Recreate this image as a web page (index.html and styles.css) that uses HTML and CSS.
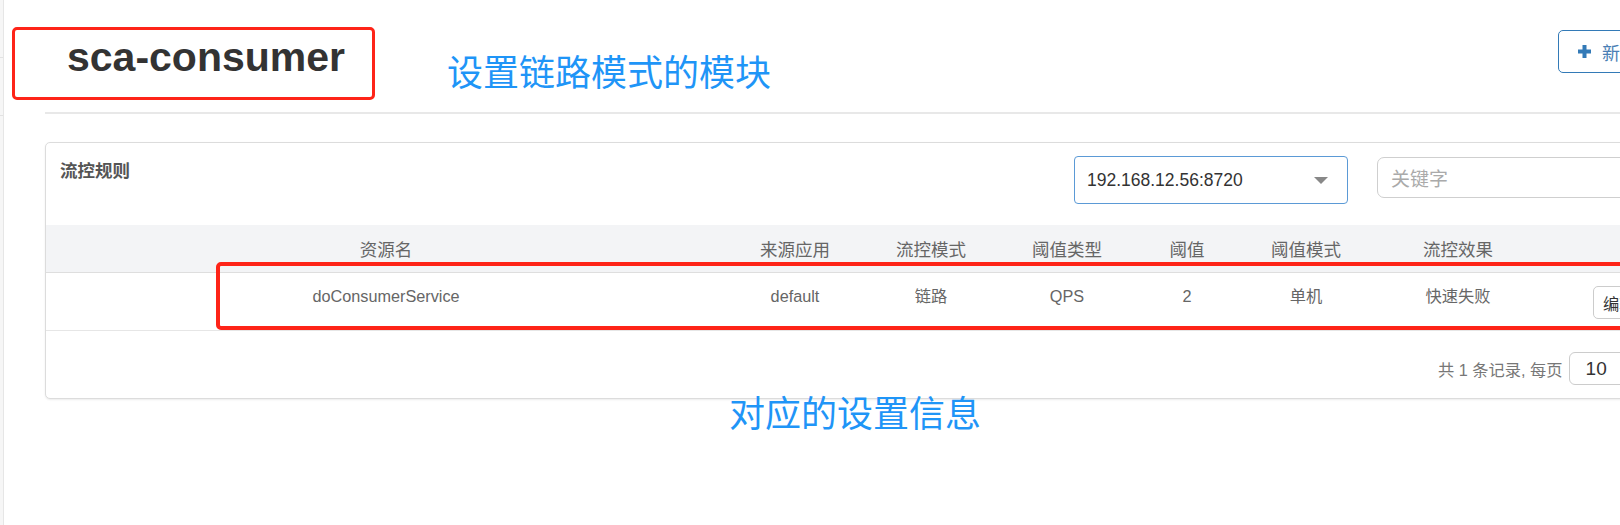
FILE: index.html
```html
<!DOCTYPE html>
<html lang="zh-CN">
<head>
<meta charset="utf-8">
<title>sca-consumer 流控规则</title>
<link rel="stylesheet" href="styles.css">
</head>
<body>
<div class="layout">
  <aside class="sidebar">
    <div class="sidebar-item"></div>
    <div class="sidebar-item"></div>
  </aside>
  <main class="main">
    <header class="page-header">
      <h1 class="page-title">sca-consumer</h1>
      <div class="header-actions">
        <button class="btn-add" type="button">
          <svg class="plus" width="15" height="15" viewBox="0 0 15 15" aria-hidden="true"><path d="M7.5 1v13M1 7.5h13" stroke="#337ab7" stroke-width="4" fill="none"/></svg>
          <span>新增流控规则</span>
        </button>
      </div>
    </header>

    <section class="card">
      <div class="card-head">
        <div class="card-title">流控规则</div>
        <div class="select">
          <span>192.168.12.56:8720</span>
          <span class="caret"></span>
        </div>
        <div class="search">关键字</div>
      </div>
      <table class="rules">
        <colgroup>
          <col class="c-res"><col class="c-app"><col class="c-mode"><col class="c-type">
          <col class="c-val"><col class="c-cluster"><col class="c-effect"><col class="c-op">
        </colgroup>
        <thead>
          <tr>
            <th>资源名</th><th>来源应用</th><th>流控模式</th><th>阈值类型</th>
            <th>阈值</th><th>阈值模式</th><th>流控效果</th><th>操作</th>
          </tr>
        </thead>
        <tbody>
          <tr>
            <td>doConsumerService</td><td>default</td><td>链路</td><td>QPS</td>
            <td>2</td><td>单机</td><td>快速失败</td>
            <td class="ops"><button class="btn-op" type="button">编辑</button><button class="btn-op" type="button">删除</button></td>
          </tr>
        </tbody>
      </table>
      <div class="pager">
        <span class="pager-text">共 1 条记录, 每页</span>
        <span class="page-size">10</span>
      </div>
    </section>
  </main>
</div>

<div class="mark mark-title"></div>
<div class="mark mark-row"></div>
<div class="note note-top">设置链路模式的模块</div>
<div class="note note-bottom">对应的设置信息</div>
</body>
</html>
```

FILE: styles.css
```css
html, body {
  margin: 0;
  padding: 0;
}
body {
  width: 1620px;
  height: 525px;
  overflow: hidden;
  position: relative;
  background: #fff;
  font-family: "Liberation Sans", "Noto Sans CJK SC", sans-serif;
  color: #333;
}
.layout {
  display: flex;
}
.sidebar {
  flex: 0 0 3px;
  height: 525px;
  background: #f6f6f6;
  border-right: 1px solid #e6e6e6;
}
.sidebar-item {
  height: 57px;
  border-bottom: 1px solid #e2e2e2;
}
.main {
  flex: 0 0 1700px;
  padding-left: 41px;
}
.page-header {
  display: grid;
  grid-template-columns: 1513px auto;
  height: 112px;
  border-bottom: 2px solid #e8e8e8;
}
.page-title {
  margin: 0;
  padding: 37px 0 0 22px;
  font-size: 41px;
  line-height: 41px;
  font-weight: bold;
  color: #333;
  white-space: nowrap;
}
.btn-add {
  margin-top: 30px;
  height: 43px;
  box-sizing: border-box;
  display: flex;
  align-items: center;
  gap: 10px;
  padding: 0 14px 0 18px;
  border: 1px solid #337ab7;
  border-radius: 5px;
  background: #fff;
  color: #4a7fb5;
  font-family: inherit;
  font-size: 18px;
  white-space: nowrap;
}
.plus {
  display: block;
}
.card {
  margin-top: 28px;
  width: 1660px;
  border: 1px solid #dcdcdc;
  border-radius: 5px;
  box-shadow: 0 1px 2px rgba(0, 0, 0, 0.08);
  background: #fff;
}
.card-head {
  display: grid;
  grid-template-columns: 985px 274px 400px;
  column-gap: 29px;
  height: 82px;
  padding-left: 14px;
  align-items: start;
}
.card-title {
  padding-top: 16px;
  font-size: 17.5px;
  line-height: 24px;
  font-weight: bold;
  color: #555;
}
.select {
  margin-top: 13px;
  height: 48px;
  box-sizing: border-box;
  display: flex;
  align-items: center;
  justify-content: space-between;
  padding: 0 19px 0 12px;
  border: 1px solid #5b9ad6;
  border-radius: 4px;
  font-size: 17.5px;
  color: #333;
}
.caret {
  width: 0;
  height: 0;
  border-left: 7px solid transparent;
  border-right: 7px solid transparent;
  border-top: 7px solid #888;
}
.search {
  margin-top: 14px;
  height: 41px;
  box-sizing: border-box;
  display: flex;
  align-items: center;
  padding-left: 13px;
  border: 1px solid #cfcfcf;
  border-radius: 7px;
  font-size: 19px;
  color: #aaa;
}
.rules {
  width: 1658px;
  table-layout: fixed;
  border-collapse: collapse;
}
.c-res { width: 680px; }
.c-app { width: 138px; }
.c-mode { width: 134px; }
.c-type { width: 138px; }
.c-val { width: 102px; }
.c-cluster { width: 136px; }
.c-effect { width: 168px; }
.c-op { width: 250px; }
.rules th {
  height: 47px;
  padding: 0;
  background: #f3f4f6;
  border-bottom: 1px solid #dedede;
  font-size: 17.5px;
  font-weight: normal;
  color: #666;
  text-align: center;
  vertical-align: middle;
}
.rules td {
  height: 58px;
  box-sizing: border-box;
  padding: 12px 0 0;
  border-bottom: 1px solid #e6e6e6;
  font-size: 16.25px;
  line-height: 23px;
  color: #666;
  text-align: center;
  vertical-align: top;
  white-space: nowrap;
}
.rules td.ops {
  padding: 13px 0 0 51px;
  text-align: left;
}
.btn-op {
  height: 33px;
  box-sizing: border-box;
  margin-right: 5px;
  padding: 0 9px;
  border: 1px solid #ccc;
  border-radius: 5px;
  background: #fff;
  font-family: inherit;
  font-size: 16.25px;
  color: #333;
}
.pager {
  display: flex;
  align-items: center;
  gap: 6px;
  padding: 21px 0 13px 1392px;
}
.pager-text {
  font-size: 16.25px;
  color: #777;
  white-space: nowrap;
}
.page-size {
  width: 70px;
  height: 33px;
  box-sizing: border-box;
  display: flex;
  align-items: center;
  padding-left: 16px;
  border: 1px solid #ccc;
  border-radius: 6px;
  font-size: 19px;
  color: #333;
}
.mark {
  position: absolute;
  box-sizing: border-box;
  border: 3px solid #fe2418;
  border-radius: 5px;
}
.mark-title {
  left: 12px;
  top: 27px;
  width: 363px;
  height: 73px;
}
.mark-row {
  left: 216px;
  top: 262px;
  width: 1500px;
  height: 68px;
  border-width: 4px;
}
.note {
  position: absolute;
  font-family: "Noto Sans CJK SC", sans-serif;
  font-size: 36px;
  line-height: 36px;
  color: #1f95f7;
  white-space: nowrap;
}
.note-top {
  left: 447px;
  top: 52px;
}
.note-bottom {
  left: 729px;
  top: 393px;
}
```
